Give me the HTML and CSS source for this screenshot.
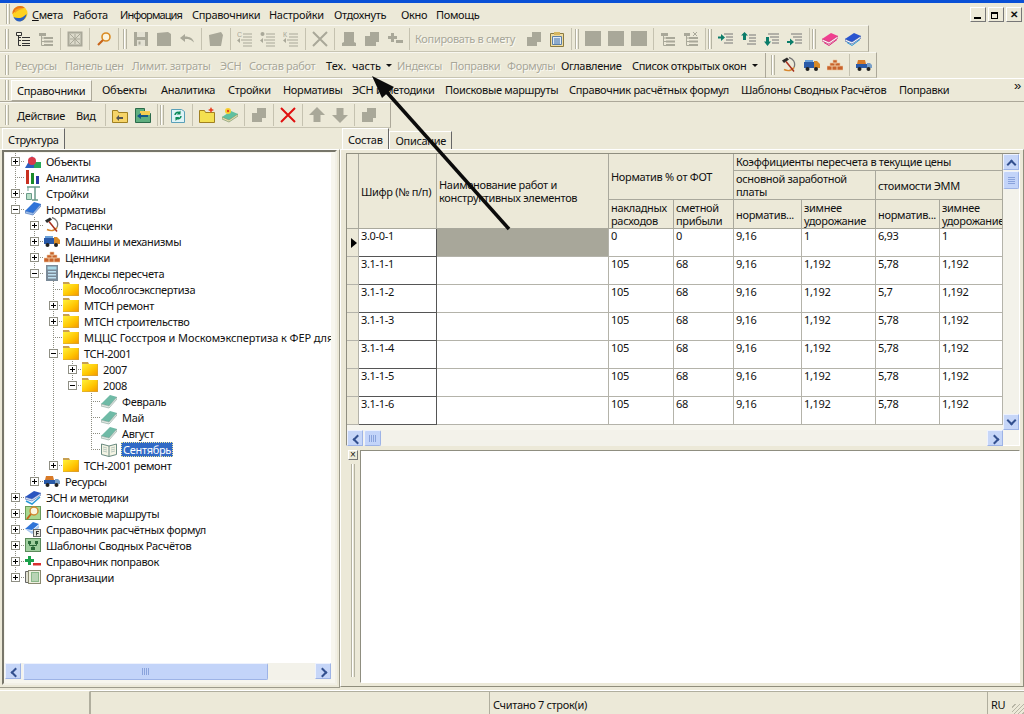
FILE: index.html
```html
<!DOCTYPE html>
<html lang="ru">
<head>
<meta charset="utf-8">
<title>Смета</title>
<link rel="stylesheet" href="styles.css">
</head>
<body>
<svg class="defs" width="0" height="0" aria-hidden="true">
  <symbol id="logo" viewBox="0 0 16 16"><circle cx="8" cy="7.500" r="7.500" fill="#ffd21f"/><path d="M.5 8A7.500 7.500 0 0 1 13 2C8 1.500 4 4 .5 8z" fill="#e8731a"/><path d="M3 4c3-2 6-2 9-1-4 0-7 2-9 4z" fill="#f6a21e"/><path d="M1.500 11c4 2 9 1.500 13-3C14 13 10 15.500 7.500 15.500 5 15.500 3 14 1.500 11z" fill="#2a5fc0"/></symbol>
  <symbol id="tree" viewBox="0 0 16 16"><path d="M1.500 1.500h5v3h-5z" fill="#f4f2e4" stroke="#333"/><path d="M7 6.500h8M7 9.500h8M7 12.500h8M7 14.500h8" stroke="#333"/><path d="M3.500 4.500v10H6M3.500 6.500H6M3.500 9.500H6" fill="none" stroke="#333"/></symbol>
  <symbol id="tree-d" viewBox="0 0 16 16"><path d="M1 2h7v3H1zM6 6h9v2H6zM6 9.500h9v2H6zM6 13h9v2H6z" fill="#a9a899"/><path d="M3.500 5v9.500H6M3.500 7H6M3.500 10.500H6" fill="none" stroke="#a9a899"/></symbol>
  <symbol id="tree-x" viewBox="0 0 16 16"><path d="M1 2h6v3H1zM6 6h9v2H6zM6 9.500h9v2H6zM6 13h9v2H6z" fill="#a9a899"/><path d="M3.500 5v9.500H6M3.500 7H6M3.500 10.500H6" fill="none" stroke="#a9a899"/><path d="M10 1l4 4M14 1l-4 4" stroke="#a9a899"/></symbol>
  <symbol id="grid-d" viewBox="0 0 16 16"><rect x="0.500" y="0.500" width="15" height="15" fill="#a9a899"/><rect x="2.500" y="2.500" width="11" height="11" fill="#dcdacb"/><path d="M3 3l10 10M13 3L3 13M8 3v10M3 8h10" stroke="#a9a899"/></symbol>
  <symbol id="search" viewBox="0 0 16 16"><circle cx="10" cy="6" r="4" fill="#fbf4dd" stroke="#d98a22" stroke-width="1.600"/><path d="M7 9l-5 5" stroke="#c8641a" stroke-width="2.200"/></symbol>
  <symbol id="save-d" viewBox="0 0 16 16"><path d="M1 1h14v14H1z" fill="#a9a899"/><path d="M4 1h8v5H4zM4 9h8v6H4z" fill="#e3e1d3"/><path d="M5.500 10.500h2v3h-2z" fill="#a9a899"/></symbol>
  <symbol id="doc-d" viewBox="0 0 16 16"><path d="M1 2l11-1 3 2v12H1z" fill="#a9a899"/></symbol>
  <symbol id="undo-d" viewBox="0 0 16 16"><path d="M1 7l5-4v2.500c5 0 8 2 9 6-3-3-5-3.500-9-3.500V11z" fill="#a9a899"/></symbol>
  <symbol id="page-d" viewBox="0 0 16 16"><path d="M1 4l12-3 2 3-2 11H2z" fill="#a9a899"/></symbol>
  <symbol id="list-c" viewBox="0 0 16 16"><text x="0" y="6" font-size="7" fill="#a9a899" font-family="Liberation Sans">С</text><path d="M6 3h9M6 6h9M4 9h11M6 12h9M6 15h9" stroke="#a9a899" fill="none"/><path d="M0 9.500l3-2.500v5z" fill="#a9a899"/></symbol>
  <symbol id="list-m" viewBox="0 0 16 16"><circle cx="2.500" cy="3" r="2" fill="#a9a899"/><path d="M6 3h9M6 6h9M4 9h11M6 12h9M6 15h9" stroke="#a9a899" fill="none"/><path d="M0 9.500l3-2.500v5z" fill="#a9a899"/></symbol>
  <symbol id="list-k" viewBox="0 0 16 16"><text x="0" y="6" font-size="7" fill="#a9a899" font-family="Liberation Sans">К</text><path d="M6 3h9M6 6h9M4 9h11M6 12h9M6 15h9" stroke="#a9a899" fill="none"/><path d="M0 9.500l3-2.500v5z" fill="#a9a899"/></symbol>
  <symbol id="x-d" viewBox="0 0 16 16"><path d="M1 1l14 14M15 1L1 15" stroke="#a9a899" stroke-width="2"/></symbol>
  <symbol id="stack-d" viewBox="0 0 16 16"><path d="M3 1h10v10l2 1v3H1v-3l2-1z" fill="#a9a899"/></symbol>
  <symbol id="stack2-d" viewBox="0 0 16 16"><path d="M6 1h9v10h-3v4H1V5h5z" fill="#a9a899"/></symbol>
  <symbol id="plus-d" viewBox="0 0 16 16"><path d="M4 2h3v3h3v3H7v3H4V8H1V5h3zM9 9h7v3H9z" fill="#a9a899"/></symbol>
  <symbol id="clip" viewBox="0 0 16 16"><path d="M1.500 2.500h13v13h-13z" fill="#efdca0" stroke="#8a7a40"/><path d="M3.500 5.500h9v8h-9z" fill="#dfeaf7" stroke="#5b7fa8"/><path d="M5 8h6M5 10h6M5 12h6" stroke="#3a6aa0"/><path d="M5 1h6v3H5z" fill="#d6b660"/></symbol>
  <symbol id="square-d" viewBox="0 0 16 16"><rect width="16" height="15" fill="#a9a899"/></symbol>
  <symbol id="sort-a" viewBox="0 0 16 16"><path d="M6 3h9M8 6h7M8 9h7M6 12h9" stroke="#777"/><path d="M0 5.500h3V3l4 3.500L3 10V7.500H0z" fill="#0b7d6a"/></symbol>
  <symbol id="sort-b" viewBox="0 0 16 16"><path d="M8 4h7M8 7h7M8 10h7M6 13h9" stroke="#777"/><path d="M0 4.500L3.500 1 7 4.500H5V9H2V4.500z" fill="#0b7d6a"/></symbol>
  <symbol id="sort-c" viewBox="0 0 16 16"><path d="M4 3h11M6 6h9M8 9h7M8 12h7" stroke="#777"/><path d="M0 10.500L3.500 15 7 10.500H5V6H2v4.500z" fill="#0b7d6a"/></symbol>
  <symbol id="sort-d" viewBox="0 0 16 16"><path d="M4 3h11M6 6h9M8 9h7M8 12h7" stroke="#777"/><path d="M0 10h3V7.500l4 3.500-4 3.500V12H0z" fill="#0b7d6a"/></symbol>
  <symbol id="book-pink" viewBox="0 0 16 16"><path d="M0 8l9-6 7 3-9 6z" fill="#ef3f8f"/><path d="M0 8l7 3 9-6v2l-9 6-7-3z" fill="#fff" stroke="#c01060" stroke-width=".6"/><path d="M2 11.500l5 3 8-6" stroke="#e02080" fill="none"/></symbol>
  <symbol id="book-blue" viewBox="0 0 16 16"><path d="M0 8l9-6 7 3-9 6z" fill="#2a55d0"/><path d="M0 8l7 3 9-6v2l-9 6-7-3z" fill="#fff" stroke="#153a9a" stroke-width=".6"/><path d="M2 11.500l5 3 8-6" stroke="#2a9ad8" fill="none"/></symbol>
  <symbol id="hammer" viewBox="0 0 16 16"><path d="M8 .5c4 1 7 5 5 10" fill="none" stroke="#777" stroke-width="1.300"/><path d="M13 10.500c-2 3-6 4-10 2" fill="none" stroke="#d8882e" stroke-width="1.600"/><path d="M1 3.500l5-3 2 2-5 3.500z" fill="#2b2b2b"/><path d="M5 4.500l8 10" stroke="#a8301e" stroke-width="1.500"/></symbol>
  <symbol id="truck" viewBox="0 0 16 16"><path d="M0 5h10v6H0z" fill="#2a5aa8"/><path d="M10 4h3l3 3v4h-6z" fill="#d88a28"/><path d="M1 3h8v2H1z" fill="#6aa0d8"/><circle cx="3.500" cy="12" r="2" fill="#222"/><circle cx="12" cy="12" r="2" fill="#222"/></symbol>
  <symbol id="truck2" viewBox="0 0 16 16"><path d="M0 7h11v4H0z" fill="#2a5aa8"/><path d="M11 6h3l2 2v3h-5z" fill="#7aa0c8"/><path d="M2 3h7l1 4H1z" fill="#d87a28"/><circle cx="3.500" cy="12" r="2" fill="#222"/><circle cx="12.500" cy="12" r="2" fill="#222"/></symbol>
  <symbol id="bricks" viewBox="0 0 16 16"><path d="M6 3h4v3H6zM3 6h5v3H3zM8 6h5v3H8zM0 9h5v4H0zM5 9h5v4H5zM10 9h6v4h-6z" fill="#c8632c" stroke="#efc8a0" stroke-width=".6"/></symbol>
  <symbol id="up-folder" viewBox="0 0 16 16"><path d="M.5 3.500h5l1 2h9v10H.5z" fill="#f6d468" stroke="#a08020"/><path d="M4 11l3-3v2h4v2H7v2z" fill="#555"/></symbol>
  <symbol id="tree-folder" viewBox="0 0 16 16"><path d="M.5 1.500h9v5h6v9H.5z" fill="#5fae7f" stroke="#2a6a4a"/><path d="M5 4h10v4H5z" fill="#f4cc50"/><path d="M2 9l4-3v2h7v2H6v2z" fill="#13578a"/></symbol>
  <symbol id="refresh" viewBox="0 0 16 16"><path d="M1.500 2.500h10l3 2v11h-13z" fill="#dff3f6" stroke="#5aa0b8"/><path d="M5 8a3 3 0 0 1 5-2M11 9a3 3 0 0 1-5 2" stroke="#0a8a5a" stroke-width="1.500" fill="none"/><path d="M10.500 3.500v4h-4zM5.500 14v-4h4z" fill="#0a8a5a"/></symbol>
  <symbol id="new-folder" viewBox="0 0 16 16"><path d="M.5 3.500h5l1 2h9v10H.5z" fill="#f4e050" stroke="#a08020"/><path d="M12 0l1 2 2 1-2 1-1 2-1-2-2-1 2-1z" fill="#e84020"/></symbol>
  <symbol id="new-book" viewBox="0 0 16 16"><path d="M0 10l9-6 7 3-9 6z" fill="#5fc0a0"/><path d="M0 10l7 3 9-6v2l-9 6-7-3z" fill="#e8e0b0" stroke="#6a8a60" stroke-width=".6"/><circle cx="6" cy="4" r="3" fill="#f8d030"/><circle cx="6" cy="4" r="1.200" fill="#e84020"/></symbol>
  <symbol id="copy-d" viewBox="0 0 16 16"><path d="M6 1h9v10h-4v4H1V6h5z" fill="#a9a899"/></symbol>
  <symbol id="x-red" viewBox="0 0 16 16"><path d="M1 1l14 14M15 1L1 15" stroke="#e01010" stroke-width="2"/></symbol>
  <symbol id="up-d" viewBox="0 0 16 16"><path d="M8 0l8 8h-4.500v7h-7V8H0z" fill="#a9a899"/></symbol>
  <symbol id="down-d" viewBox="0 0 16 16"><path d="M8 16l8-8h-4.500V1h-7v7H0z" fill="#a9a899"/></symbol>
  <symbol id="obj" viewBox="0 0 16 16"><path d="M0 15L7 3l7 12z" fill="#2a5fc0"/><path d="M9 9h7v6H9z" fill="#28a85a"/><circle cx="7" cy="8" r="4" fill="#d83a4a"/></symbol>
  <symbol id="bars" viewBox="0 0 16 16"><path d="M1 1h3v14H1z" fill="#c83020"/><path d="M6 4h3v11H6z" fill="#1a8a2a"/><path d="M11 7h3v8h-3z" fill="#2a3aa8"/></symbol>
  <symbol id="crane" viewBox="0 0 16 16"><path d="M2 2h13M10 2v13M7 15h6" stroke="#6a9a8a" stroke-width="1.500" fill="none"/><path d="M3 2v4" stroke="#6a9a8a"/><path d="M1.500 8.500h5v6h-5z" fill="#b8e0c8" stroke="#6a9a8a"/></symbol>
  <symbol id="book" viewBox="0 0 16 16"><path d="M0 10L9 1l7 2-8 9z" fill="#2f74d8"/><path d="M0 10l8 2 8-9v2l-8 9-8-2z" fill="#a8c8f0" stroke="#1a4aa0" stroke-width=".5"/></symbol>
  <symbol id="calc" viewBox="0 0 16 16"><rect x="2" y="0" width="12" height="16" fill="#7a8a98"/><rect x="3.500" y="1.500" width="9" height="3" fill="#a8d8e8"/><path d="M4 6h8v1.500H4zM4 9h8v1.500H4zM4 12h8v1.500H4z" fill="#bfe0f0"/></symbol>
  <symbol id="folder" viewBox="0 0 16 16"><defs><linearGradient id="fg" x1="0" y1="0" x2="1" y2="1"><stop offset="0" stop-color="#fff23a"/><stop offset=".6" stop-color="#ffc400"/><stop offset="1" stop-color="#f49a00"/></linearGradient></defs><path d="M0 1h6l1 2h9v12H0z" fill="#c8a050"/><path d="M0 3h15.500v11.500H0z" fill="url(#fg)"/></symbol>
  <symbol id="book-green" viewBox="0 0 16 16"><path d="M0 11L9 2l7 2-8 9z" fill="#6fbaa6"/><path d="M0 11l8 2 8-9v2l-8 9-8-2z" fill="#e8eee8" stroke="#6a8a80" stroke-width=".5"/></symbol>
  <symbol id="book-open" viewBox="0 0 16 16"><path d="M.5 3l7.500 2 7.500-2v10.500L8 15.500.5 13.500z" fill="#f4f4e4" stroke="#6a8a80"/><path d="M8 5v10" stroke="#6a8a80"/><path d="M2 6l4 1M2 8l4 1M2 10l4 1M10 7l4-1M10 9l4-1M10 11l4-1" stroke="#b8c8c0"/></symbol>
  <symbol id="books" viewBox="0 0 16 16"><path d="M0 8l9-6 7 2-9 6z" fill="#2a55c0"/><path d="M0 8l7 2 9-6v2l-9 6-7-2z" fill="#dfe8f8" stroke="#153a9a" stroke-width=".5"/><path d="M1 12l6 3 8-7" stroke="#2a9ad8" stroke-width="1.500" fill="none"/></symbol>
  <symbol id="route" viewBox="0 0 16 16"><rect x=".5" y="1.500" width="15" height="13" fill="#a8d890" stroke="#6a9a5a"/><circle cx="9" cy="6" r="4" fill="#fbf6e0" stroke="#d08a30" stroke-width="1.400"/><path d="M6 9l-4 5" stroke="#c8641a" stroke-width="2"/></symbol>
  <symbol id="formula" viewBox="0 0 16 16"><path d="M0 8l8-7 6 2-7 6z" fill="#2f74d8"/><path d="M0 8l7 2 7-6v3l-7 6z" fill="#a8c8f0"/><rect x="8.500" y="8.500" width="7" height="7" fill="#e8e8e0" stroke="#666"/><path d="M11 10.500h3M11.500 10.500v4M11.500 12.500h2" stroke="#333"/></symbol>
  <symbol id="tpl" viewBox="0 0 16 16"><rect x=".5" y="1.500" width="15" height="13" fill="#9fcf9f" stroke="#5a8a5a"/><rect x="3" y="4" width="3" height="3" fill="#2a6a3a"/><rect x="10" y="4" width="3" height="3" fill="#2a6a3a"/><rect x="6" y="10" width="4" height="3" fill="#2a6a3a"/><path d="M4.500 7v1.500h7V7M8 8.500V10" stroke="#2a6a3a" fill="none"/></symbol>
  <symbol id="plusminus" viewBox="0 0 16 16"><path d="M3 3h3v3h3v3H6v3H3V9H0V6h3z" fill="#1aa04a"/><path d="M8 10h8v2.500H8z" fill="#d83030"/></symbol>
  <symbol id="org" viewBox="0 0 16 16"><path d="M.5 2.500h3v11h-3z" fill="#e0e0d0" stroke="#666"/><rect x="3.500" y="1.500" width="12" height="13" fill="#eef0e0" stroke="#8a8a70"/><rect x="6" y="3" width="8" height="10" fill="#8ab88a"/><path d="M7 5h6M7 7h6M7 9h6M7 11h6" stroke="#e8f0e0"/></symbol>
</svg>

<div class="app">
  <div class="titlestrip"></div>

  <div class="menubar">
    <span class="grip"></span>
    <svg class="ic logo"><use href="#logo"/></svg>
    <nav class="menu">
      <span><u>С</u>мета</span><span>Работа</span><span class="tight">Информация</span><span>Справочники</span><span>Настройки</span><span>Отдохнуть</span><span>Окно</span><span>Помощь</span>
    </nav>
    <div class="winbtns">
      <span class="wb"><i class="wmin"></i></span><span class="wb"><i class="wres"></i></span><span class="wb wclose">✕</span>
    </div>
  </div>

  <div class="tb tb1">
    <span class="grip"></span>
    <span class="b"><svg class="ic"><use href="#tree"/></svg></span>
    <span class="b"><svg class="ic"><use href="#tree-d"/></svg></span>
    <span class="sep"></span>
    <span class="b"><svg class="ic"><use href="#grid-d"/></svg></span>
    <span class="sep"></span>
    <span class="b"><svg class="ic"><use href="#search"/></svg></span>
    <span class="sep"></span>
    <span class="grip grip-mid"></span>
    <span class="b"><svg class="ic"><use href="#save-d"/></svg></span>
    <span class="b"><svg class="ic"><use href="#doc-d"/></svg></span>
    <span class="b"><svg class="ic"><use href="#undo-d"/></svg></span>
    <span class="sep"></span>
    <span class="b"><svg class="ic"><use href="#page-d"/></svg></span>
    <span class="sep"></span>
    <span class="b"><svg class="ic"><use href="#list-c"/></svg></span>
    <span class="b"><svg class="ic"><use href="#list-m"/></svg></span>
    <span class="b"><svg class="ic"><use href="#list-k"/></svg></span>
    <span class="sep"></span>
    <span class="b"><svg class="ic"><use href="#x-d"/></svg></span>
    <span class="sep"></span>
    <span class="b"><svg class="ic"><use href="#stack-d"/></svg></span>
    <span class="b"><svg class="ic"><use href="#stack2-d"/></svg></span>
    <span class="b"><svg class="ic"><use href="#plus-d"/></svg></span>
    <span class="sep"></span>
    <span class="tbtext dis">Копировать в смету</span>
    <span class="b"><svg class="ic"><use href="#copy-d"/></svg></span>
    <span class="b"><svg class="ic"><use href="#clip"/></svg></span>
    <span class="sep"></span>
    <span class="grip grip-s"></span>
    <span class="b"><svg class="ic"><use href="#square-d"/></svg></span>
    <span class="b"><svg class="ic"><use href="#square-d"/></svg></span>
    <span class="b"><svg class="ic"><use href="#square-d"/></svg></span>
    <span class="sep"></span>
    <span class="b"><svg class="ic"><use href="#tree-d"/></svg></span>
    <span class="b"><svg class="ic"><use href="#tree-x"/></svg></span>
    <span class="sep"></span>
    <span class="grip"></span>
    <span class="b"><svg class="ic"><use href="#sort-a"/></svg></span>
    <span class="b"><svg class="ic"><use href="#sort-b"/></svg></span>
    <span class="b"><svg class="ic"><use href="#sort-c"/></svg></span>
    <span class="b"><svg class="ic"><use href="#sort-d"/></svg></span>
    <span class="sep"></span>
    <span class="grip"></span>
    <span class="b"><svg class="ic"><use href="#book-pink"/></svg></span>
    <span class="b"><svg class="ic"><use href="#book-blue"/></svg></span>
  </div>

  <div class="tb tb2">
    <span class="grip"></span>
    <div class="tlist">
      <span class="dis">Ресурсы</span><span class="dis">Панель цен</span><span class="dis">Лимит. затраты</span><span class="dis">ЭСН</span><span class="dis">Состав работ</span><span class="dd wide">Тех. часть<i class="caret"></i></span><span class="dis">Индексы</span><span class="dis">Поправки</span><span class="dis">Формулы</span><span>Оглавление</span><span class="dd">Список открытых окон<i class="caret"></i></span>
    </div>
    <span class="tb-break"></span>
    <span class="grip"></span>
    <span class="b"><svg class="ic"><use href="#hammer"/></svg></span>
    <span class="b"><svg class="ic"><use href="#truck"/></svg></span>
    <span class="b"><svg class="ic"><use href="#bricks"/></svg></span>
    <span class="sep"></span>
    <span class="b"><svg class="ic"><use href="#truck2"/></svg></span>
  </div>

  <div class="tabbar">
    <span class="grip"></span>
    <div class="tablist">
      <span class="on">Справочники</span><span>Объекты</span><span>Аналитика</span><span>Стройки</span><span>Нормативы</span><span>ЭСН и методики</span><span>Поисковые маршруты</span><span>Справочник расчётных формул</span><span>Шаблоны Сводных Расчётов</span><span>Поправки</span>
    </div>
    <span class="more">»</span>
  </div>

  <div class="tb tb3">
    <span class="grip"></span>
    <div class="tbwords"><span>Действие</span><span>Вид</span></div>
    <span class="sep"></span>
    <span class="b"><svg class="ic"><use href="#up-folder"/></svg></span>
    <span class="b"><svg class="ic"><use href="#tree-folder"/></svg></span>
    <span class="sep"></span>
    <span class="grip"></span>
    <span class="b"><svg class="ic"><use href="#refresh"/></svg></span>
    <span class="sep"></span>
    <span class="b"><svg class="ic"><use href="#new-folder"/></svg></span>
    <span class="b"><svg class="ic"><use href="#new-book"/></svg></span>
    <span class="sep"></span>
    <span class="b"><svg class="ic"><use href="#copy-d"/></svg></span>
    <span class="sep"></span>
    <span class="b"><svg class="ic"><use href="#x-red"/></svg></span>
    <span class="sep"></span>
    <span class="b"><svg class="ic"><use href="#up-d"/></svg></span>
    <span class="b"><svg class="ic"><use href="#down-d"/></svg></span>
    <span class="sep"></span>
    <span class="b"><svg class="ic"><use href="#stack2-d"/></svg></span>
  </div>

  <div class="main">
    <section class="left">
      <div class="tabs"><span class="tab active">Структура</span></div>
      <div class="leftbody">
        <div class="treebox">
          <div class="tree">
            <div class="r"><i class="c v h"><b class="p"></b></i><svg class="ic"><use href="#obj"/></svg><span>Объекты</span></div>
            <div class="r"><i class="c v h"></i><svg class="ic"><use href="#bars"/></svg><span>Аналитика</span></div>
            <div class="r"><i class="c v h"><b class="p"></b></i><svg class="ic"><use href="#crane"/></svg><span>Стройки</span></div>
            <div class="r"><i class="c v h"><b class="m"></b></i><svg class="ic"><use href="#book"/></svg><span>Нормативы</span></div>
            <div class="r"><i class="c v"></i><i class="c v h"><b class="p"></b></i><svg class="ic"><use href="#hammer"/></svg><span>Расценки</span></div>
            <div class="r"><i class="c v"></i><i class="c v h"><b class="p"></b></i><svg class="ic"><use href="#truck"/></svg><span>Машины и механизмы</span></div>
            <div class="r"><i class="c v"></i><i class="c v h"><b class="p"></b></i><svg class="ic"><use href="#bricks"/></svg><span>Ценники</span></div>
            <div class="r"><i class="c v"></i><i class="c v h"><b class="m"></b></i><svg class="ic"><use href="#calc"/></svg><span>Индексы пересчета</span></div>
            <div class="r"><i class="c v"></i><i class="c v"></i><i class="c v h"></i><svg class="ic"><use href="#folder"/></svg><span>Мособлгосэкспертиза</span></div>
            <div class="r"><i class="c v"></i><i class="c v"></i><i class="c v h"><b class="p"></b></i><svg class="ic"><use href="#folder"/></svg><span>МТСН ремонт</span></div>
            <div class="r"><i class="c v"></i><i class="c v"></i><i class="c v h"><b class="p"></b></i><svg class="ic"><use href="#folder"/></svg><span>МТСН строительство</span></div>
            <div class="r"><i class="c v"></i><i class="c v"></i><i class="c v h"></i><svg class="ic"><use href="#folder"/></svg><span class="long">МЦЦС Госстроя и Москомэкспертиза к ФЕР для</span></div>
            <div class="r"><i class="c v"></i><i class="c v"></i><i class="c v h"><b class="m"></b></i><svg class="ic"><use href="#folder"/></svg><span>ТСН-2001</span></div>
            <div class="r"><i class="c v"></i><i class="c v"></i><i class="c v"></i><i class="c v h"><b class="p"></b></i><svg class="ic"><use href="#folder"/></svg><span>2007</span></div>
            <div class="r"><i class="c v"></i><i class="c v"></i><i class="c v"></i><i class="c u h"><b class="m"></b></i><svg class="ic"><use href="#folder"/></svg><span>2008</span></div>
            <div class="r"><i class="c v"></i><i class="c v"></i><i class="c v"></i><i class="c"></i><i class="c v h"></i><svg class="ic"><use href="#book-green"/></svg><span>Февраль</span></div>
            <div class="r"><i class="c v"></i><i class="c v"></i><i class="c v"></i><i class="c"></i><i class="c v h"></i><svg class="ic"><use href="#book-green"/></svg><span>Май</span></div>
            <div class="r"><i class="c v"></i><i class="c v"></i><i class="c v"></i><i class="c"></i><i class="c v h"></i><svg class="ic"><use href="#book-green"/></svg><span>Август</span></div>
            <div class="r"><i class="c v"></i><i class="c v"></i><i class="c v"></i><i class="c"></i><i class="c u h"></i><svg class="ic"><use href="#book-open"/></svg><span class="sel">Сентябрь</span></div>
            <div class="r"><i class="c v"></i><i class="c v"></i><i class="c u h"><b class="p"></b></i><svg class="ic"><use href="#folder"/></svg><span>ТСН-2001 ремонт</span></div>
            <div class="r"><i class="c v"></i><i class="c u h"><b class="p"></b></i><svg class="ic"><use href="#truck2"/></svg><span>Ресурсы</span></div>
            <div class="r"><i class="c v h"><b class="p"></b></i><svg class="ic"><use href="#books"/></svg><span>ЭСН и методики</span></div>
            <div class="r"><i class="c v h"><b class="p"></b></i><svg class="ic"><use href="#route"/></svg><span>Поисковые маршруты</span></div>
            <div class="r"><i class="c v h"><b class="p"></b></i><svg class="ic"><use href="#formula"/></svg><span>Справочник расчётных формул</span></div>
            <div class="r"><i class="c v h"><b class="p"></b></i><svg class="ic"><use href="#tpl"/></svg><span>Шаблоны Сводных Расчётов</span></div>
            <div class="r"><i class="c v h"><b class="p"></b></i><svg class="ic"><use href="#plusminus"/></svg><span>Справочник поправок</span></div>
            <div class="r"><i class="c u h"><b class="p"></b></i><svg class="ic"><use href="#org"/></svg><span>Организации</span></div>
          </div>
          <div class="hs hs-tree">
            <span class="sb sb-l"></span><span class="thumb thumb-wide"></span><span class="track"></span><span class="sb sb-r"></span>
          </div>
        </div>
      </div>
    </section>

    <section class="right">
      <div class="tabs tabs-r"><span class="tab active">Состав</span><span class="tab">Описание</span></div>
      <div class="rightbody">
        <div class="upper">
          <div class="gridrow">
            <div class="gridclip">
              <table class="grid">
                <colgroup><col class="w-i"><col class="w-a"><col class="w-b"><col class="w-c"><col class="w-d"><col class="w-e"><col class="w-f"><col class="w-g"><col class="w-h"></colgroup>
                <thead>
                  <tr class="h1"><th rowspan="3"></th><th rowspan="3" class="mid">Шифр (№ п/п)</th><th rowspan="3" class="mid">Наименование работ и конструктивных элементов</th><th colspan="2" rowspan="2" class="mid">Норматив % от ФОТ</th><th colspan="4" class="clip">Коэффициенты пересчета в текущие цены</th></tr>
                  <tr class="h2"><th colspan="2">основной заработной платы</th><th colspan="2" class="mid">стоимости ЭММ</th></tr>
                  <tr class="h3"><th>накладных расходов</th><th>сметной прибыли</th><th class="mid">норматив...</th><th>зимнее удорожание</th><th class="mid">норматив...</th><th>зимнее удорожание</th></tr>
                </thead>
                <tbody>
                  <tr><td class="ind"><i class="rowmark"></i></td><td class="code">3.0-0-1</td><td class="graycell"></td><td>0</td><td>0</td><td>9,16</td><td>1</td><td>6,93</td><td>1</td></tr>
                  <tr><td class="ind"></td><td class="code">3.1-1-1</td><td></td><td>105</td><td>68</td><td>9,16</td><td>1,192</td><td>5,78</td><td>1,192</td></tr>
                  <tr><td class="ind"></td><td class="code">3.1-1-2</td><td></td><td>105</td><td>68</td><td>9,16</td><td>1,192</td><td>5,7</td><td>1,192</td></tr>
                  <tr><td class="ind"></td><td class="code">3.1-1-3</td><td></td><td>105</td><td>68</td><td>9,16</td><td>1,192</td><td>5,78</td><td>1,192</td></tr>
                  <tr><td class="ind"></td><td class="code">3.1-1-4</td><td></td><td>105</td><td>68</td><td>9,16</td><td>1,192</td><td>5,78</td><td>1,192</td></tr>
                  <tr><td class="ind"></td><td class="code">3.1-1-5</td><td></td><td>105</td><td>68</td><td>9,16</td><td>1,192</td><td>5,78</td><td>1,192</td></tr>
                  <tr><td class="ind"></td><td class="code">3.1-1-6</td><td></td><td>105</td><td>68</td><td>9,16</td><td>1,192</td><td>5,78</td><td>1,192</td></tr>
                </tbody>
              </table>
            </div>
            <div class="vs">
              <span class="sb sb-u"></span><span class="vthumb"></span><span class="vtrack"></span><span class="sb sb-d"></span>
            </div>
          </div>
          <div class="hs hs-grid">
            <span class="sb sb-l"></span><span class="thumb thumb-small"></span><span class="track"></span><span class="sb sb-r"></span>
          </div>
        </div>
        <div class="lower">
          <div class="closecol"><span class="closex">×</span><span class="vgrip"></span></div>
          <div class="memo"></div>
        </div>
      </div>
    </section>
  </div>

  <footer class="status">
    <span class="s0"></span><span class="s1"></span><span class="s2">Считано 7 строк(и)</span><span class="s3">RU</span>
  </footer>

  <svg class="arrow" viewBox="0 0 1024 714" aria-hidden="true">
    <path d="M509 229L383 88" stroke="#0b0b0b" stroke-width="3.500" fill="none"/>
    <path d="M372 76l22 11-12 11z" fill="#0b0b0b"/>
  </svg>
</div>
</body>
</html>
```

FILE: styles.css
```css
* { box-sizing: border-box; }
html, body { margin: 0; padding: 0; height: 100%; overflow: hidden; }
body { font: 11px/13px "Noto Sans", "Liberation Sans", sans-serif; letter-spacing: -0.32px; color: #111; background: #ece9d8; }
.defs { position: absolute; }
.app { position: relative; width: 1024px; height: 714px; display: flex; flex-direction: column; }
.ic { width: 16px; height: 16px; display: block; flex: none; }

.titlestrip { height: 3px; background: #0a50d6; flex: none; }

.grip { width: 4px; height: 20px; margin: 0 2px 0 0; flex: none; border-left: 1px solid #b5b3a2; border-right: 1px solid #b5b3a2; box-shadow: inset 1px 0 #fff; }
.grip-mid { margin: 0 2px; }
.grip-s { margin-left: 1px; }

.menubar { height: 22px; padding-left: 6px; display: flex; align-items: center; flex: none; }
.logo { margin-left: 0; }
.menu { display: grid; grid-template-columns: 41px 47px 72px 77px 65px 67px 35px auto; margin-left: 4px; white-space: nowrap; }
.tight { letter-spacing: -0.9px; }
.winbtns { margin-left: auto; display: flex; gap: 2px; padding-right: 2px; margin-top: 1px; }
.wb { width: 16px; height: 15px; background: #ece9d8; border: 1px solid; border-color: #fff #777 #777 #fff; position: relative; font: bold 10px/13px "Liberation Sans", sans-serif; letter-spacing: 0; text-align: center; display: block; }
.wmin { position: absolute; left: 3px; bottom: 2px; width: 7px; height: 2px; background: #000; }
.wres { position: absolute; left: 2px; top: 4px; width: 7px; height: 7px; border: 1px solid #000; border-top-width: 2px; background: #ece9d8; }
.wres::before { content: ""; position: absolute; left: 2px; top: -4px; width: 7px; height: 6px; border: 1px solid #000; border-top-width: 2px; z-index: -1; }

.tb { display: flex; align-items: center; flex: none; padding-left: 5px; background: #ece9d8; border-top: 1px solid #f8f7f0; border-right: 1px solid #aca899; border-bottom: 1px solid #c7c4b2; }
.tb1 { width: 869px; height: 27px; }
.tb2 { width: 877px; height: 26px; }
.tb3 { width: 391px; height: 26px; }
.b { width: 23px; height: 22px; display: flex; align-items: center; justify-content: center; flex: none; }
.sep { width: 6px; height: 22px; flex: none; background: linear-gradient(#c5c2b0, #c5c2b0) center / 1px 100% no-repeat; }
.tbtext { width: 110px; padding-left: 3px; flex: none; white-space: nowrap; }
.dis { color: #a8a799; text-shadow: 1px 1px 0 #fbfaf4; }
.tlist { display: grid; grid-template-columns: 50px 67px 88px 29px 77px 71px 53px 57px 54px 71px auto; margin-left: 4px; width: 750px; flex: none; white-space: nowrap; }
.dd { display: inline-flex; align-items: center; }
.wide { word-spacing: 3px; letter-spacing: 0; }
.caret { display: block; border: 3px solid transparent; border-top: 3px solid #111; border-bottom: 0; margin-left: 5px; }
.tb-break { width: 1px; height: 25px; background: #aca899; margin-right: 5px; flex: none; }

.tabbar { height: 24px; flex: none; display: flex; align-items: center; padding-left: 5px; position: relative; border-top: 1px solid #fff; border-bottom: 1px solid #aca899; }
.tablist { display: grid; grid-template-columns: 91px 59px 67px 55px 69px 93px 124px 172px 158px auto; white-space: nowrap; }
.tablist span { padding: 3px 0; }
.tablist .on { width: 81px; padding: 3px 5px; background: #f5f3e8; border: 1px solid; border-color: #fff #aca899 #aca899 #fff; }
.more { position: absolute; right: 3px; top: 0; font: 13px/14px "Liberation Sans", sans-serif; }
.tbwords { display: flex; width: 91px; padding-left: 6px; flex: none; white-space: nowrap; }
.tbwords span { margin-right: 11px; }

.main { display: flex; height: 560px; flex: none; }
.left { width: 340px; flex: none; display: flex; flex-direction: column; }
.right { flex: 1; display: flex; flex-direction: column; min-width: 0; }

.tabs { height: 21px; flex: none; display: flex; align-items: flex-end; padding-left: 2px; position: relative; }
.tab { height: 18px; padding: 2px 5px 0 6px; border: 1px solid #fff; border-right-color: #666; border-bottom: 0; white-space: nowrap; }
.tab.active { height: 21px; padding-top: 4px; padding-left: 5px; background: #f0eee2; }

.leftbody { flex: 1; display: flex; flex-direction: column; min-height: 0; padding: 0 2px 2px 2px; border-top: 1px solid #fff; border-right: 1px solid #9d9b8b; border-bottom: 1px solid #9d9b8b; }
.treebox { flex: 1; min-height: 0; padding: 1px 4px 3px 1px; background: #f7f6ee; border: 2px solid; border-color: #77766a #f2f0e6 #f2f0e6 #77766a; display: flex; flex-direction: column; overflow: hidden; }
.tree { flex: 1; padding-left: 1px; background: #fff; white-space: nowrap; overflow: hidden; min-height: 0; }
.r { height: 16px; display: flex; align-items: center; }
.r > span { margin-left: 5px; padding: 0 2px 0 0; }
.r > .long { letter-spacing: -0.1px; }
.c { width: 19px; height: 16px; flex: none; position: relative; display: block; background-repeat: no-repeat; }
.c.v { background-image: repeating-linear-gradient(to bottom, #8c8c80 0 1px, transparent 1px 2px); background-size: 1px 16px; background-position: 9px 0; }
.c.u { background-image: repeating-linear-gradient(to bottom, #8c8c80 0 1px, transparent 1px 2px); background-size: 1px 8px; background-position: 9px 0; }
.c.h::before { content: ""; position: absolute; left: 9px; right: 0; top: 8px; height: 1px; background: repeating-linear-gradient(to right, #8c8c80 0 1px, transparent 1px 2px); }
.c b { position: absolute; left: 5px; top: 4px; width: 9px; height: 9px; background-color: #fff; border: 1px solid #8f8f84; }
.c b::before { content: ""; position: absolute; left: 1px; top: 3px; width: 5px; height: 1px; background: #000; }
.c b.p::after { content: ""; position: absolute; left: 3px; top: 1px; width: 1px; height: 5px; background: #000; }
.sel { background: #316ac5; color: #fff; outline: 1px dotted #f0e8a0; outline-offset: -1px; margin-left: 4px !important; padding: 1px 2px 1px 2px !important; }

.hs { height: 16px; flex: none; display: flex; background: #f3f2ea; align-items: stretch; }
.hs-tree { height: 17px; }
.sb { width: 16px; height: 16px; flex: none; background: #c6d6f8 center no-repeat; border: 1px solid #eef2fd; border-right-color: #9db3e6; border-bottom-color: #9db3e6; position: relative; display: block; }
.sb::after { content: ""; position: absolute; left: 5px; top: 5px; width: 5px; height: 5px; border: solid #33508f; border-width: 2px 0 0 2px; }
.sb-l::after { transform: rotate(-45deg); left: 6px; }
.sb-r::after { transform: rotate(135deg); left: 3px; }
.sb-u::after { transform: rotate(45deg); top: 6px; left: 4px; }
.sb-d::after { transform: rotate(225deg); top: 2px; left: 4px; }
.thumb { background: #c3d4f9; border: 1px solid #eef2fd; border-right-color: #9db3e6; border-bottom-color: #9db3e6; border-radius: 2px; flex: none; }
.thumb-wide { width: 245px; margin-left: 2px; background: #c3d4f9 repeating-linear-gradient(to right, #8aa3dc 0 1px, transparent 1px 2px) center / 7px 7px no-repeat; }
.thumb-small { width: 17px; margin-left: 1px; background: #c3d4f9 repeating-linear-gradient(to right, #8aa3dc 0 1px, transparent 1px 2px) center / 7px 7px no-repeat; }
.track { flex: 1; }

.rightbody { flex: 1; padding: 3px 3px 3px 5px; background: #ece9d8; border: 1px solid; border-color: #fff #8f8d7c #8f8d7c #fff; display: flex; flex-direction: column; min-height: 0; margin-bottom: 1px; }
.upper { height: 293px; flex: none; background: #f6f5ee; border: 1px solid; border-color: #8f8e80 #fff #fff #8f8e80; }
.gridrow { display: flex; height: 276px; }
.gridclip { width: 656px; height: 276px; overflow: hidden; flex: none; background: #f6f5ee; }
.grid { border-collapse: separate; border-spacing: 0; table-layout: fixed; width: 656px; }
.w-i { width: 12px; } .w-a { width: 78px; } .w-b { width: 172px; } .w-c { width: 65px; } .w-d { width: 60px; } .w-e { width: 68px; } .w-f { width: 74px; } .w-g { width: 64px; } .w-h { width: 63px; }
.grid th { font-weight: normal; text-align: left; vertical-align: bottom; background: #ece9d8; border-right: 1px solid #a9a89c; border-bottom: 1px solid #a9a89c; padding: 1px 1px 1px 2px; overflow: hidden; line-height: 13px; }
.grid th.mid { vertical-align: middle; }
.grid th.clip { white-space: nowrap; padding: 1px 0 0 2px; vertical-align: top; }
.h1 { height: 17px; } .h2 { height: 29px; } .h3 { height: 29px; }
.grid tbody tr { height: 28px; }
.grid td { background: #fff; border-right: 1px solid #b4b3aa; border-bottom: 1px solid #b4b3aa; vertical-align: top; padding: 0 1px 0 2px; overflow: hidden; white-space: nowrap; }
.grid td.ind { background: #ece9d8; position: relative; padding: 0; }
.grid td.code { border-right-color: #555; border-bottom-color: #555; }
.grid td.graycell { background: #a8a79a; }
.rowmark { display: block; margin: 9px 0 0 4px; border: 5px solid transparent; border-left: 6px solid #000; border-right: 0; }
.vs { width: 16px; height: 276px; flex: none; display: flex; flex-direction: column; background: #f3f2ea; }
.vthumb { height: 18px; flex: none; margin-top: 1px; background: #c3d4f9 repeating-linear-gradient(to bottom, #8aa3dc 0 1px, transparent 1px 2px) center / 7px 7px no-repeat; border: 1px solid #eef2fd; border-right-color: #9db3e6; border-bottom-color: #9db3e6; border-radius: 2px; }
.vtrack { flex: 1; }
.hs-grid { width: 656px; }

.lower { flex: 1; display: flex; margin-top: 4px; min-height: 0; }
.closecol { width: 14px; flex: none; display: flex; flex-direction: column; align-items: center; }
.closex { width: 10px; height: 10px; border: 1px solid; border-color: #fff #777 #777 #fff; font: 10px/8px "Liberation Sans", sans-serif; letter-spacing: 0; text-align: center; display: block; }
.vgrip { width: 4px; flex: 1; margin: 4px 0 6px; border-left: 1px solid #b5b3a2; border-right: 1px solid #b5b3a2; box-shadow: inset 1px 0 #fff; }
.memo { flex: 1; background: #fff; border: 1px solid; border-color: #8f8e80 #fff #fff #8f8e80; }

.status { height: 26px; flex: none; display: flex; margin-top: 2px; align-items: stretch; border-top: 1px solid #fff; }
.status span { display: block; border-right: 1px solid #b0ae9e; border-top: 1px solid #b0ae9e; padding: 6px 0 0 3px; white-space: nowrap; }
.s0 { width: 90px; border-top-color: transparent !important; }
.s1 { width: 400px; border-left: 1px solid #b0ae9e; }
.s2 { width: 498px; }
.s3 { flex: 1; border-right: 0 !important; background: repeating-linear-gradient(135deg, transparent 0 2px, #b8b6a6 2px 3px) right bottom / 12px 12px no-repeat; }

.arrow { position: absolute; left: 0; top: 0; width: 1024px; height: 714px; pointer-events: none; }
```
